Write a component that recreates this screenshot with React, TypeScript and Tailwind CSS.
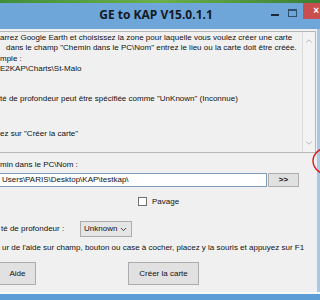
import { ChevronDown, ChevronUp } from 'lucide-react';

const ui = { fontFamily: '"Liberation Sans", Arial, sans-serif' };

const noteLines = [
  { text: 'arrez Google Earth et choisissez la zone pour laquelle vous voulez créer une carte', cls: 'pl-0' },
  { text: 'dans le champ "Chemin dans le PC\\Nom" entrez le lieu ou la carte doit être créée.', cls: 'pl-[6px]' },
  { text: 'mple :', cls: 'pl-0' },
  { text: 'E2KAP\\Charts\\St-Malo', cls: 'pl-0' },
  { text: 'té de profondeur peut être spécifiée comme "UnKnown" (Inconnue)', cls: 'pl-0 mt-[20px]' },
  { text: 'ez sur "Créer la carte"', cls: 'pl-0 mt-[25px]' },
];

function TitleBar() {
  return (
    <div className="relative h-[26px] bg-[#6ea6da] flex items-center justify-center">
      <span
        className="text-[12px] font-bold text-[#141a22] -mt-[3px] mr-[8px]"
        style={{ fontFamily: '"Open Sans", "Liberation Sans", sans-serif' }}
      >
        GE to KAP V15.0.1.1
      </span>
      {/* window controls */}
      <div className="absolute right-0 top-0 h-full flex items-start">
        <div className="w-[8px] h-[2px] bg-[#1d2a3a] mt-[11px] mr-[9px]" />
        <div className="w-[9px] h-[8px] border border-[#30506e] border-t-2 mt-[6px] mr-[6px]" />
        <div className="w-[17px] h-[16px] bg-[#c94f4f] flex items-center justify-end pr-[1px]">
          <span className="text-white text-[10px] font-bold leading-none" style={ui}>
            ×
          </span>
        </div>
      </div>
    </div>
  );
}

function NotesBox() {
  return (
    <div className="h-[122px] border-t border-r border-b border-[#b5b7bb] bg-[#f0f0f0] flex mr-[1px]">
      <div className="flex-1 pt-[1px] text-[8px] leading-[10.3px] text-[#111] whitespace-nowrap overflow-hidden" style={ui}>
        {noteLines.map((l) => (
          <div key={l.text} className={l.cls}>
            {l.text}
          </div>
        ))}
      </div>
      <div className="w-[13px] border-l border-[#dcdcdc] bg-[#f3f3f3] flex flex-col items-center justify-between py-[4px]">
        <ChevronUp size={10} strokeWidth={2} className="text-[#a6a6a6]" />
        <ChevronDown size={10} strokeWidth={2} className="text-[#a6a6a6]" />
      </div>
    </div>
  );
}

function Button({ label, w }: { label: string; w: string }) {
  return (
    <div
      className={`${w} h-[23px] bg-[#e1e1e1] border border-[#adadad] flex items-center justify-center text-[8px] text-[#111]`}
      style={ui}
    >
      {label}
    </div>
  );
}

export default function App() {
  return (
    <div className="relative w-[320px] h-[300px] overflow-hidden bg-[#f0f0f0]">
      <div className="h-[3px] bg-gradient-to-r from-[#3f8f3a] via-[#6bb04a] to-[#3a7f35]" />
      <TitleBar />

      <div className="flex h-[263px]">
        <div className="flex-1 flex flex-col pt-[2px] text-[8px] text-[#111]" style={ui}>
          <NotesBox />

          <div className="mt-[7px] leading-[10px]">min dans le PC\Nom :</div>

          <div className="mt-[3px] flex items-center gap-[1px]">
            <div className="w-[267px] h-[14px] bg-white border border-[#7f9db9] border-l-0 flex items-center pl-[2px] leading-none">
              Users\PARIS\Desktop\KAP\testkap\
            </div>
            <div className="w-[31px] h-[14px] bg-[#e1e1e1] border border-[#adadad] flex items-center justify-center text-[8px] font-bold">
              &gt;&gt;
            </div>
          </div>

          <div className="mt-[10px] flex items-center pl-[138px] gap-[5px]">
            <div className="w-[9px] h-[9px] bg-white border border-[#707070]" />
            <span className="leading-none">Pavage</span>
          </div>

          <div className="mt-[15px] flex items-center">
            <span className="w-[80px] pl-[1px]">té de profondeur :</span>
            <div className="w-[52px] h-[16px] bg-[#e5e5e5] border border-[#acacac] flex items-center justify-between pl-[3px] pr-[3px]">
              <span>Unknown</span>
              <ChevronDown size={9} strokeWidth={2.5} className="text-[#333]" />
            </div>
          </div>

          <div className="mt-[6px] pl-[2px] leading-[10px] whitespace-nowrap">
            ur de l'aide sur champ, bouton ou case à cocher, placez y la souris et appuyez sur F1
          </div>

          <div className="mt-[9px] flex items-center">
            <Button label="Aide" w="w-[36px] border-l-0" />
            <div className="w-[92px]" />
            <Button label="Créer la carte" w="w-[71px]" />
          </div>
        </div>
        <div className="w-[3px] bg-[#a9c8e6]" />
      </div>

      <div className="h-[2px] bg-[#f9f9f9]" />
      <div className="h-[6px] bg-[#5c9dd6]" />
      <div className="h-[2px] bg-[#3d8a3a]" />

      {/* hand drawn red mark */}
      <svg className="absolute left-[300px] top-[140px]" width="20" height="45" viewBox="0 0 20 45">
        <ellipse cx="33" cy="21" rx="20" ry="15" fill="none" stroke="#e01818" strokeWidth="1.4" />
      </svg>
    </div>
  );
}
